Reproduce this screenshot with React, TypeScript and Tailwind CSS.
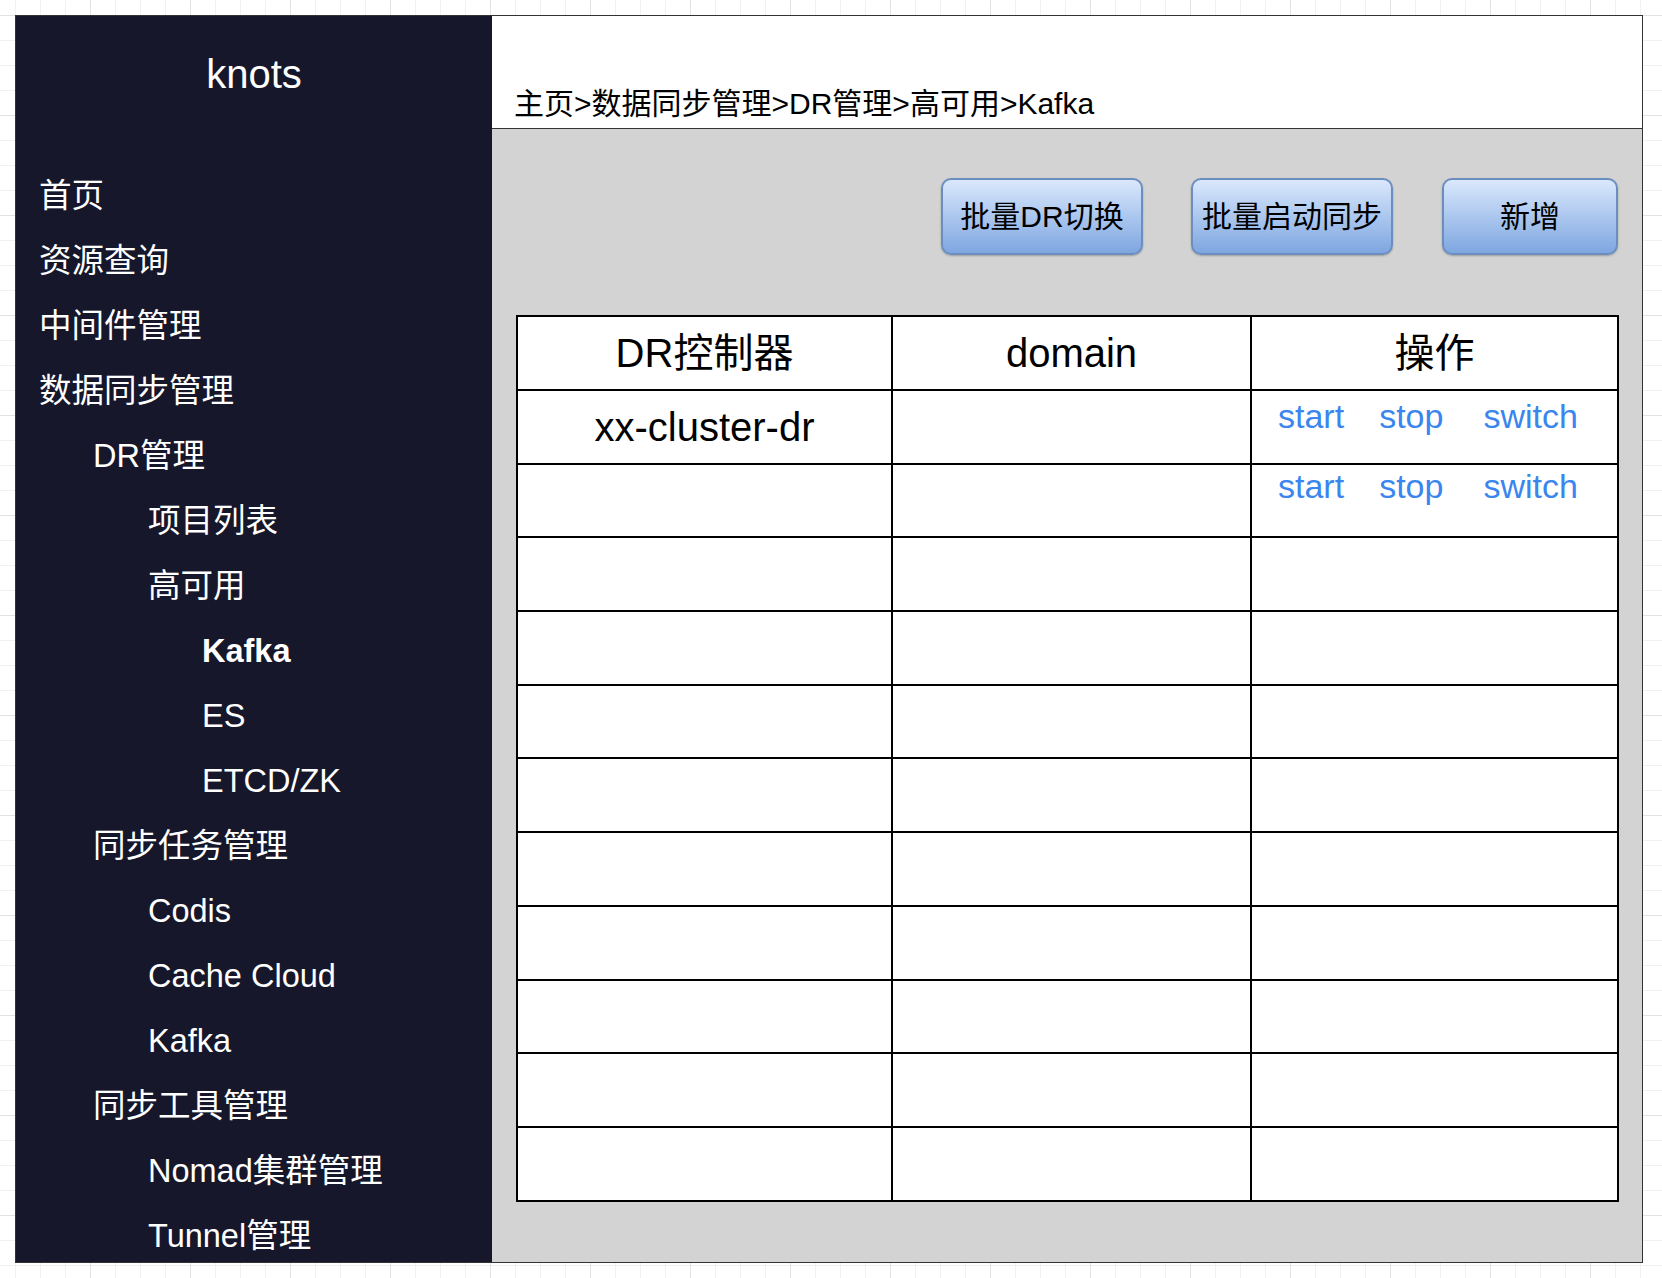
const menu: { label: string; level: number; bold?: boolean }[] = [
  { label: "首页", level: 0 },
  { label: "资源查询", level: 0 },
  { label: "中间件管理", level: 0 },
  { label: "数据同步管理", level: 0 },
  { label: "DR管理", level: 1 },
  { label: "项目列表", level: 2 },
  { label: "高可用", level: 2 },
  { label: "Kafka", level: 3, bold: true },
  { label: "ES", level: 3 },
  { label: "ETCD/ZK", level: 3 },
  { label: "同步任务管理", level: 1 },
  { label: "Codis", level: 2 },
  { label: "Cache Cloud", level: 2 },
  { label: "Kafka", level: 2 },
  { label: "同步工具管理", level: 1 },
  { label: "Nomad集群管理", level: 2 },
  { label: "Tunnel管理", level: 2 },
];

const indent = ["pl-[23px]", "pl-[77px]", "pl-[132px]", "pl-[186px]"];

const rows = [
  { name: "xx-cluster-dr", ops: true, pad: "pt-[8px]" },
  { name: "", ops: true, pad: "pt-[4px]" },
  ...Array.from({ length: 9 }, () => ({ name: "", ops: false, pad: "" })),
];

const Ops = ({ pad }: { pad: string }) => (
  <div className={`flex text-[34px] leading-[34px] text-[#3a86ee] pl-[26px] ${pad}`}>
    <span>start</span>
    <span className="ml-[35px]">stop</span>
    <span className="ml-[40px]">switch</span>
  </div>
);

const Button = ({ label, width }: { label: string; width: string }) => (
  <button
    className={`${width} h-[77px] rounded-[10px] border-2 border-[#6c8ebf] bg-linear-to-b from-[#dae8fc] to-[#7ea6e0] text-[30px] leading-none text-black shadow-[0_1px_2px_rgba(0,0,0,0.25)]`}
  >
    {label}
  </button>
);

export default function App() {
  return (
    <div className="min-h-screen w-[1662px] h-[1278px] bg-white bg-[linear-gradient(to_right,#e2e2e2_1px,transparent_1px),linear-gradient(to_bottom,#e2e2e2_1px,transparent_1px),linear-gradient(to_right,#f1f1f1_1px,transparent_1px),linear-gradient(to_bottom,#f1f1f1_1px,transparent_1px)] bg-size-[100px_100px,100px_100px,25px_25px,25px_25px] bg-position-[90px_15px,90px_15px,15px_15px,15px_15px] pt-[15px] pl-[15px] font-['Liberation_Sans','Noto_Sans_CJK_SC',sans-serif]">
      <div className="flex w-[1628px] h-[1248px] border border-[#333] overflow-hidden">
        {/* Sidebar */}
        <aside className="w-[476px] shrink-0 bg-[#16172b] text-white overflow-hidden">
          <div className="pt-[38px] text-center text-[40px] leading-[40px]">knots</div>
          <ul className="mt-[70px]">
            {menu.map((m, i) => (
              <li
                key={i}
                className={`h-[65px] flex items-center text-[32.5px] ${indent[m.level]} ${m.bold ? "font-bold" : ""}`}
              >
                {m.label}
              </li>
            ))}
          </ul>
        </aside>

        {/* Main */}
        <main className="flex-1 flex flex-col bg-[#d3d3d3]">
          <header className="h-[113px] shrink-0 bg-white border-b border-[#333] pt-[73px] pl-[22px] text-[30px] leading-[30px] text-black">
            主页&gt;数据同步管理&gt;DR管理&gt;高可用&gt;Kafka
          </header>

          <div className="pt-[49px] pr-[24px] flex justify-end">
            <Button label="批量DR切换" width="w-[202px]" />
            <div className="w-[48px]" />
            <Button label="批量启动同步" width="w-[202px]" />
            <div className="w-[49px]" />
            <Button label="新增" width="w-[176px]" />
          </div>

          <table className="mt-[60px] ml-[24px] w-[1101px] table-fixed border-collapse bg-white text-black">
            <colgroup>
              <col className="w-[375px]" />
              <col className="w-[359px]" />
              <col className="w-[367px]" />
            </colgroup>
            <thead>
              <tr className="h-[74px]">
                <th className="border-2 border-black text-[40px] font-normal">DR控制器</th>
                <th className="border-2 border-black text-[40px] font-normal">domain</th>
                <th className="border-2 border-black text-[40px] font-normal">操作</th>
              </tr>
            </thead>
            <tbody>
              {rows.map((r, i) => (
                <tr key={i} className="h-[73.7px]">
                  <td className="border-2 border-black text-center text-[40px] align-middle">{r.name}</td>
                  <td className="border-2 border-black" />
                  <td className="border-2 border-black align-top p-0">{r.ops && <Ops pad={r.pad} />}</td>
                </tr>
              ))}
            </tbody>
          </table>
        </main>
      </div>
    </div>
  );
}
